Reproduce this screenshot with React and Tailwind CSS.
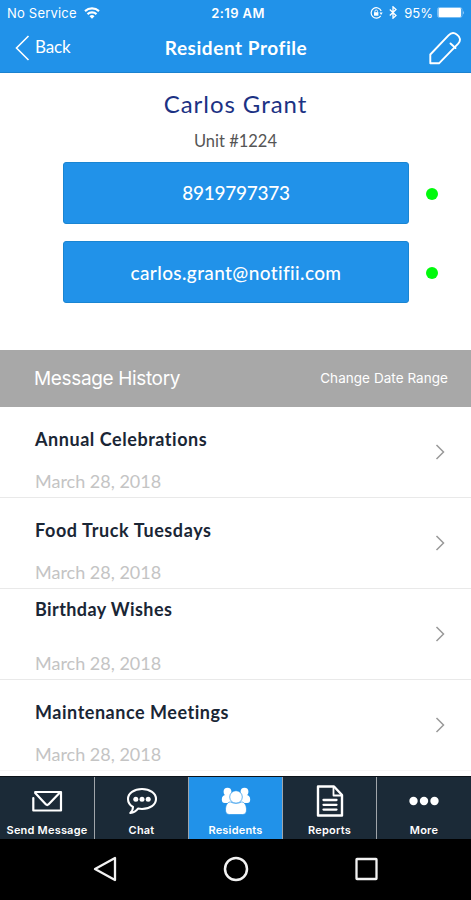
import { clsx } from "clsx";

const contacts = [
    { value: "8919797373", spacing: "pb-px tracking-[-0.25px]" },
    { value: "carlos.grant@notifii.com", spacing: "pt-px tracking-[0.38px]" },
];

const messages = [
    { title: "Annual Celebrations", date: "March 28, 2018", pad: "pt-[21px]", gap: "mt-[19px]", tracking: "tracking-[0.55px]" },
    { title: "Food Truck Tuesdays", date: "March 28, 2018", pad: "pt-[21px]", gap: "mt-[19px]", tracking: "tracking-[0.6px]" },
    { title: "Birthday Wishes", date: "March 28, 2018", pad: "pt-[9px]", gap: "mt-[31px]", tracking: "tracking-[0.4px]" },
    { title: "Maintenance Meetings", date: "March 28, 2018", pad: "pt-[21px]", gap: "mt-[19px]", tracking: "tracking-[0.53px]" },
];

function StatusBar() {
    return (
        <div className="flex h-[25px] items-center px-[7px] font-['Inter',sans-serif] text-[13px] leading-[16px]">
            <div className="flex flex-1 items-center gap-[7px]">
                <span className="tracking-[0.2px]">No Service</span>
                <svg className="h-3 w-4" viewBox="0 0 16 12" fill="none" stroke="white" strokeWidth="2.1">
                    <path d="M1 4.1a10.4 10.4 0 0 1 14 0" />
                    <path d="M3.5 7.1a6.7 6.7 0 0 1 9 0" />
                    <path d="M8 11.7 5.5 9.2a3.6 3.6 0 0 1 5 0z" fill="white" stroke="none" />
                </svg>
            </div>
            <span className="ml-[5px] font-semibold tracking-[0.4px]">2:19 AM</span>
            <div className="flex flex-1 items-center justify-end">
                <svg className="mr-[6px] h-3 w-[13px]" viewBox="0 0 13 12" fill="none" stroke="white" strokeWidth="1.2">
                    <path d="M10.7 8.8A5.2 5.2 0 1 1 11.2 4" />
                    <path d="M9.5 5.6h3.2l-1.6 2.3z" fill="white" stroke="none" />
                    <rect x="4" y="5.2" width="4.4" height="3.5" fill="white" stroke="none" />
                    <path d="M4.9 5.4V4.3a1.3 1.3 0 0 1 2.6 0v1.1" strokeWidth="0.9" />
                </svg>
                <svg className="mr-[7px] h-[13px] w-2" viewBox="0 0 8 13" fill="none" stroke="white" strokeWidth="1.3">
                    <path d="m.8 3.5 6.2 6L4 12.2V.8L7 3.5l-6.2 6" />
                </svg>
                <span>95%</span>
                <svg className="-mr-[1px] ml-[4px] h-[11px] w-[28px]" viewBox="0 0 28 11">
                    <rect x=".5" y=".5" width="24.500" height="10" rx="2" fill="none" stroke="#8cc6f5" strokeWidth=".8" />
                    <rect x="1.5" y="1" width="22.500" height="9" rx="1" fill="white" />
                    <path d="M26 3.5q1.5 2 0 4z" fill="#a9d4f8" />
                </svg>
            </div>
        </div>
    );
}

function Header() {
    return (
        <header className="h-[73px] border-b border-[#1b82cf] bg-[#2192e9] text-white">
            <StatusBar />
            <div className="flex h-[45px] items-center px-[9px]">
                <div className="flex flex-1 items-center gap-[5px] pl-[6px]">
                    <svg className="h-[26px] w-[15px]" viewBox="0 0 15 26" fill="none" stroke="white" strokeWidth="1.6">
                        <path d="M13.5 1 1.5 13l12 12" />
                    </svg>
                    <span className="-mt-[2px] text-[17px] leading-[20px] tracking-[-0.1px]">Back</span>
                </div>
                <h1 className="mr-[5px] text-[19px] leading-[24px] font-bold tracking-[0.55px]">Resident Profile</h1>
                <div className="flex flex-1 justify-end">
                    <svg className="h-[34px] w-[34px]" viewBox="0 0 34 34" fill="none" stroke="white" strokeWidth="1.9" strokeLinejoin="round" strokeLinecap="round">
                        <path d="M2.300 32.300V23.500L20.500 4.300C23 1.700 26 1.300 28.800 3.500c3.600 2.700 4.200 6 1.400 9.200L11 32.300z" />
                        <path d="m22.500 12.500 5 4.500" />
                    </svg>
                </div>
            </div>
        </header>
    );
}

function Profile() {
    return (
        <section className="flex h-[277px] flex-col items-center pt-[16px]">
            <h2 className="text-[24px] leading-[30px] tracking-[0.95px] text-[#1c3284]">Carlos Grant</h2>
            <p className="mt-[12px] text-[16.500px] leading-[20px] text-[#555]">Unit #1224</p>
            <div className="mt-[11px] flex w-full flex-col gap-[17px] pl-[63px]">
                {contacts.map((contact) => (
                    <div key={contact.value} className="flex items-center">
                        <button className={clsx("h-[62px] w-[346px] rounded-[3px] border border-[#1a85d2] bg-[#2192e9] text-[19px] leading-[24px] font-medium text-white", contact.spacing)}>
                            {contact.value}
                        </button>
                        <span className="mt-px ml-[17px] size-[12px] rounded-full bg-[#00fa0c]" />
                    </div>
                ))}
            </div>
        </section>
    );
}

function MessageHistory() {
    return (
        <section className="h-[426px]">
            <div className="flex h-[57px] items-center justify-between bg-[#a8a8a8] pr-[23px] pl-[34px] font-['Inter',sans-serif] text-white">
                <h3 className="pt-[2px] text-[19px] tracking-[-0.35px]">Message History</h3>
                <span className="text-[13.500px] tracking-[0.05px]">Change Date Range</span>
            </div>
            {messages.map((message) => (
                <div key={message.title} className="flex h-[91px] justify-between border-b border-[#e9e9e9] pr-[26px] pl-[35px] last:border-[#f6f6f6]">
                    <div className={message.pad}>
                        <h4 className={clsx("text-[18px] leading-[22px] font-bold text-[#1a2635]", message.tracking)}>{message.title}</h4>
                        <p className={clsx("text-[18px] leading-[24px] text-[#c4c4c4]", message.gap)}>{message.date}</p>
                    </div>
                    <svg className="mt-[37px] h-[16px] w-[10px]" viewBox="0 0 10 16" fill="none" stroke="#999" strokeWidth="1.5">
                        <path d="m1.500 1 7 7-7 7" />
                    </svg>
                </div>
            ))}
        </section>
    );
}

const tabs = [
    {
        label: "Send Message",
        icon: (
            <svg className="h-[22px] w-[32px]" viewBox="0 0 32 22" fill="none" stroke="white" strokeWidth="2.200" strokeLinejoin="round" strokeLinecap="round">
                <path d="M4.200 2H30V20.500H2.300V8" />
                <path d="m4.200 3 10.800 11.500q1.200 1 2.400 0L28.500 3" />
            </svg>
        ),
    },
    {
        label: "Chat",
        icon: (
            <svg className="h-[28px] w-[32px]" viewBox="0 0 32 28" fill="none" stroke="white" strokeWidth="2.100" strokeLinejoin="round">
                <path d="M16 2C8 2 2 6.200 2 12c0 3.400 2 6.200 5 8 .2 2.300-.7 4-2.700 6 3.200-.4 5.700-1.700 7.700-4.400 1.300.3 2.600.4 4 .4 8 0 14-4.300 14-10S24 2 16 2z" />
                <g fill="white" stroke="none">
                    <circle cx="9.800" cy="12.300" r="2.500" />
                    <circle cx="16" cy="12.300" r="2.500" />
                    <circle cx="22.200" cy="12.300" r="2.500" />
                </g>
            </svg>
        ),
    },
    {
        label: "Residents",
        active: true,
        icon: (
            <svg className="h-[28px] w-[30px]" viewBox="0 0 30 28" fill="white">
                <circle cx="6.500" cy="4.700" r="3.900" />
                <circle cx="23.500" cy="4.700" r="3.900" />
                <path d="M.8 12.500c0-3 1.500-4.500 4-4.500h20.400c2.500 0 4 1.500 4 4.500 0 2.500-1 3.500-3 3.500H3.800c-2 0-3-1-3-3.500z" />
                <circle cx="15" cy="10" r="6.300" stroke="#2192e9" strokeWidth=".7" />
                <path d="M4.500 23c0-5 2-8 5-8 3.500 1.800 7.500 1.800 11 0 3 0 5 3 5 8 0 3-1.500 4.500-4 4.500h-13c-2.500 0-4-1.500-4-4.500z" stroke="#2192e9" strokeWidth=".7" />
            </svg>
        ),
    },
    {
        label: "Reports",
        icon: (
            <svg className="h-[32px] w-[28px]" viewBox="0 0 28 32" fill="none" stroke="white" strokeWidth="2.400" strokeLinejoin="round">
                <path d="M2 1.500h16L26 10v20.500H2z" />
                <path d="M17.500 2v8.500H26" strokeWidth="1.800" />
                <path d="M7.500 15h13M7.500 19.800h13M7.500 24.600h13" strokeWidth="2.300" strokeLinecap="round" />
            </svg>
        ),
    },
    {
        label: "More",
        icon: (
            <svg className="h-[10px] w-[30px]" viewBox="0 0 30 10" fill="white">
                <circle cx="4.500" cy="5" r="4.200" />
                <circle cx="15" cy="5" r="4.200" />
                <circle cx="25.500" cy="5" r="4.200" />
            </svg>
        ),
    },
];

function TabBar() {
    return (
        <nav className="grid h-[63px] grid-cols-[95px_94px_94px_94px_94px] border-t border-[#0b1219] bg-[#1b2a37] text-white">
            {tabs.map((tab) => (
                <div key={tab.label} className={clsx("flex flex-col items-center border-r border-[#a0a5aa] last:border-r-0", tab.active && "bg-[#2192e9]")}>
                    <div className="flex h-[47px] items-center">{tab.icon}</div>
                    <span className="font-['Inter',sans-serif] text-[11px] leading-[12px] font-semibold tracking-[0.2px] whitespace-nowrap">{tab.label}</span>
                </div>
            ))}
        </nav>
    );
}

function SystemNav() {
    return (
        <div className="flex h-[61px] items-center justify-between bg-black px-[92px] pb-px">
            <svg className="size-[26px]" viewBox="0 0 26 26" fill="none" stroke="#f2f2f2" strokeWidth="2.300" strokeLinejoin="round">
                <path d="M23 2v22L3 13z" />
            </svg>
            <svg className="size-[26px]" viewBox="0 0 26 26" fill="none" stroke="#f2f2f2" strokeWidth="2.500">
                <circle cx="13" cy="13" r="11" />
            </svg>
            <svg className="size-[26px]" viewBox="0 0 26 26" fill="none" stroke="#f2f2f2" strokeWidth="2.300">
                <rect x="3.500" y="3" width="20" height="20" rx=".5" />
            </svg>
        </div>
    );
}

function App() {
    return (
        <div className="h-[900px] w-[471px] overflow-hidden bg-white font-['Lato','Liberation_Sans',sans-serif] [font-variant-ligatures:none]">
            <Header />
            <Profile />
            <MessageHistory />
            <TabBar />
            <SystemNav />
        </div>
    );
}

export default App;
